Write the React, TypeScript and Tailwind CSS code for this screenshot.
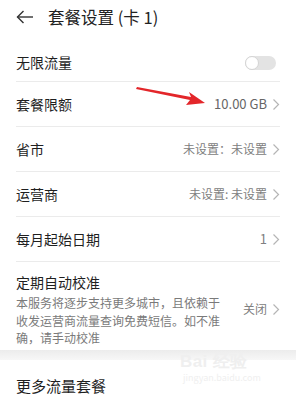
import React from 'react';

const Chevron = () => (
  <svg width="8" height="13" viewBox="0 0 8 13" className="ml-[5px] shrink-0">
    <polyline points="1.5,1.5 6.5,6.5 1.5,11.5" fill="none" stroke="#b5b5b5" strokeWidth="1.2" />
  </svg>
);

const Row: React.FC<{ label: string; value?: string; valueClass?: string; children?: React.ReactNode }> = ({ label, value, valueClass, children }) => (
  <div className="h-[45px] flex items-center justify-between border-b border-[#ebebeb]">
    <span className="text-[14px] text-[#1f1f1f]">{label}</span>
    {children ?? (
      <div className="flex items-center">
        <span className={valueClass ?? 'text-[12px] text-[#808080]'}>{value}</span>
        <Chevron />
      </div>
    )}
  </div>
);

export default function App() {
  return (
    <div className="relative w-[296px] h-[403px] bg-white overflow-hidden" style={{ fontFamily: '"Noto Sans CJK SC", "Noto Sans", sans-serif' }}>
      <header className="h-[34px] flex items-center pl-[16px]">
        <svg width="18" height="14" viewBox="0 0 18 14" className="shrink-0">
          <polyline points="7.5,1 1.5,7 7.5,13" fill="none" stroke="#333" strokeWidth="1.4" />
          <line x1="1.5" y1="7" x2="17" y2="7" stroke="#333" strokeWidth="1.4" />
        </svg>
        <h1 className="ml-[14px] text-[16.5px] text-[#222] leading-none">套餐设置 (卡 1)</h1>
      </header>

      <div className="mx-[16px]">
        <div className="h-[48px] pt-[10px] flex items-center justify-between border-b border-[#ebebeb]">
          <span className="text-[14px] text-[#1f1f1f]">无限流量</span>
          <div className="w-[31px] h-[14px] rounded-full bg-[#e3e3e3] flex items-center mr-[4px]">
            <div className="w-[14px] h-[14px] rounded-full bg-white border border-[#d4d4d4]" />
          </div>
        </div>
        <Row label="套餐限额" value="10.00 GB" valueClass="text-[13px] text-[#666]" />
        <Row label="省市" value="未设置：未设置" />
        <Row label="运营商" value="未设置: 未设置" />
        <Row label="每月起始日期" value="1" valueClass="text-[13px] text-[#808080]" />
        <div className="pt-[10px] pb-[3px] flex items-center justify-between">
          <div>
            <div className="text-[14px] leading-[20px] text-[#1f1f1f]">定期自动校准</div>
            <p className="mt-[2px] text-[12px] leading-[17.5px] text-[#7a7a7a] whitespace-nowrap">
              本服务将逐步支持更多城市，且依赖于<br />收发运营商流量查询免费短信。如不准<br />确，请手动校准
            </p>
          </div>
          <div className="flex items-center">
            <span className="text-[12px] text-[#808080]">关闭</span>
            <Chevron />
          </div>
        </div>
      </div>

      <div className="h-[10px] bg-gradient-to-b from-[#ececec] to-[#f7f7f7]" />

      <div className="px-[16px] pt-[13px]">
        <span className="text-[15px] leading-[22px] text-[#1f1f1f]">更多流量套餐</span>
      </div>

      {/* red annotation arrow */}
      <svg className="absolute left-[135px] top-[84px]" width="74" height="24" viewBox="0 0 74 24">
        <polygon points="2,3 56,13 54,8 70,19 51,21 55,16 1,5" fill="#e3262a" />
      </svg>

      {/* faint watermark */}
      <div className="absolute left-[180px] top-[352px] text-[#efefef] pointer-events-none">
        <div className="text-[17px] font-bold leading-[20px] tracking-wide" style={{ fontFamily: '"Liberation Sans", sans-serif' }}>Bai 经验</div>
        <div className="text-[9px] leading-[12px] ml-[3px]">jingyan.baidu.com</div>
      </div>
    </div>
  );
}
